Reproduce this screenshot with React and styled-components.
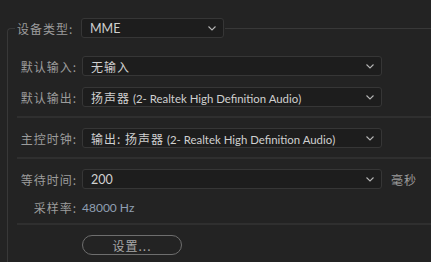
import React from "react";
import styled, { createGlobalStyle } from "styled-components";

const GlobalStyle = createGlobalStyle`
  html, body {
    margin: 0;
    padding: 0;
    background: #232323;
    width: 431px;
    height: 262px;
    overflow: hidden;
  }
  body {
    font-family: "Lato", "Noto Sans CJK SC", sans-serif;
  }
`;

const Page = styled.div`
  padding: 18px 0 0 7px;
  height: 262px;
  box-sizing: border-box;
`;

const Fieldset = styled.fieldset`
  margin: 0;
  padding: 18px 0 0 9px;
  border: 1px solid #383838;
  border-right: none;
  border-bottom: none;
  border-top-left-radius: 4px;
  min-height: 250px;
  box-sizing: border-box;
  min-inline-size: 0;
`;

const Legend = styled.legend`
  display: flex;
  align-items: center;
  gap: 5px;
  padding: 0 1px 0 2px;
  margin-left: -2px;
`;

const Label = styled.span`
  width: ${(p) => p.$width || 60}px;
  flex-shrink: 0;
  text-align: ${(p) => (p.$left ? "left" : "right")};
  font-family: "Noto Sans CJK SC", sans-serif;
  font-size: 12px;
  letter-spacing: 1px;
  color: #9c9c9c;
  white-space: nowrap;
`;

const Row = styled.div`
  display: flex;
  align-items: center;
  gap: 5px;
  height: 20px;
  margin-bottom: ${(p) => p.$after || 0}px;
`;

const Select = styled.div`
  position: relative;
  display: flex;
  align-items: center;
  width: ${(p) => p.$width}px;
  height: 20px;
  box-sizing: border-box;
  padding: 0 20px 0 8px;
  background: #1d1d1d;
  border: 1px solid #363636;
  border-radius: 3px;
  white-space: nowrap;
  overflow: hidden;
`;

const Value = styled.span`
  font-family: "Lato", "Noto Sans CJK SC", sans-serif;
  color: ${(p) => (p.$dim ? "#8f9fb2" : "#d0d0d0")};
  font-size: ${(p) => p.$size || 11.4}px;
`;

const Cjk = styled.span`
  font-family: "Noto Sans CJK SC", sans-serif;
  font-size: 12px;
  letter-spacing: 1px;
`;

const Chevron = styled.svg`
  position: absolute;
  right: 7px;
  top: 7px;
`;

const Unit = styled.span`
  font-family: "Noto Sans CJK SC", sans-serif;
  font-size: 12px;
  letter-spacing: 1px;
  color: #9c9c9c;
  margin-left: 4px;
`;

const Divider = styled.div`
  height: 2px;
  background: #2f2f2f;
  margin: ${(p) => p.$top}px 0 ${(p) => p.$bottom}px 0;
`;

const Button = styled.button`
  display: block;
  margin-left: 65px;
  width: 100px;
  height: 20px;
  border: 1px solid #6e6e6e;
  border-radius: 10px;
  background: transparent;
  color: #a8a8a8;
  font-family: "Noto Sans CJK SC", sans-serif;
  font-size: 12px;
  letter-spacing: 1px;
  padding: 0;
`;

function Arrow() {
  return (
    <Chevron width="8" height="5" viewBox="0 0 8 5">
      <path d="M0.5 0.5 L4 4 L7.5 0.5" fill="none" stroke="#b4b4b4" strokeWidth="1.1" />
    </Chevron>
  );
}

function Dropdown({ width = 300, children }) {
  return (
    <Select $width={width}>
      {children}
      <Arrow />
    </Select>
  );
}

export default function App() {
  return (
    <Page>
      <GlobalStyle />
      <Fieldset>
        <Legend>
          <Label $width={59} $left>设备类型:</Label>
          <Dropdown width={143}>
            <Value $size={12.5}>MME</Value>
          </Dropdown>
        </Legend>

        <Row $after={11}>
          <Label>默认输入:</Label>
          <Dropdown>
            <Value>
              <Cjk>无输入</Cjk>
            </Value>
          </Dropdown>
        </Row>
        <Row>
          <Label>默认输出:</Label>
          <Dropdown>
            <Value>
              <Cjk>扬声器</Cjk> (2- Realtek High Definition Audio)
            </Value>
          </Dropdown>
        </Row>

        <Divider $top={9} $bottom={10} />

        <Row>
          <Label>主控时钟:</Label>
          <Dropdown>
            <Value>
              <Cjk>输出: 扬声器</Cjk> (2- Realtek High Definition Audio)
            </Value>
          </Dropdown>
        </Row>

        <Divider $top={9} $bottom={10} />

        <Row $after={8}>
          <Label>等待时间:</Label>
          <Dropdown>
            <Value $size={12.5}>200</Value>
          </Dropdown>
          <Unit>毫秒</Unit>
        </Row>
        <Row>
          <Label>采样率:</Label>
          <Value $dim $size={12}>48000 Hz</Value>
        </Row>

        <Divider $top={6} $bottom={10} />

        <Button>设置...</Button>
      </Fieldset>
    </Page>
  );
}
